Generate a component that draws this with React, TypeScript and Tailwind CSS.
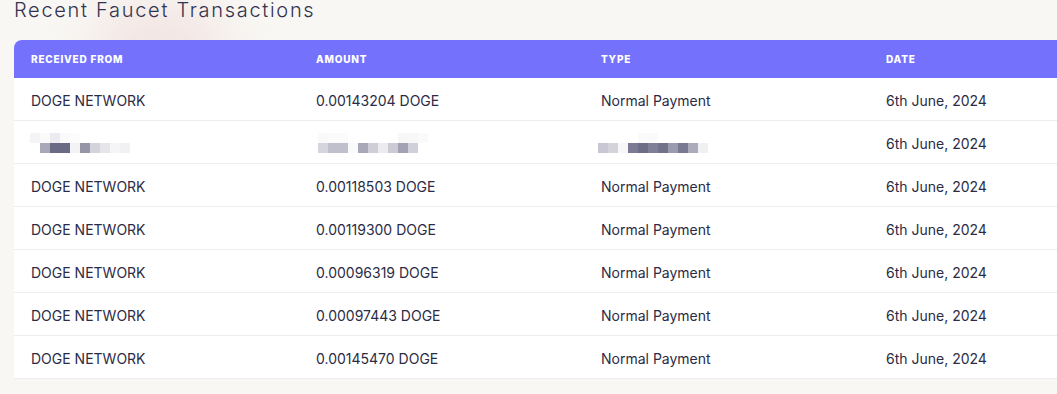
const rows = [
  { from: "DOGE NETWORK", amount: "0.00143204 DOGE", type: "Normal Payment", date: "6th June, 2024" },
  { hidden: true, date: "6th June, 2024" },
  { from: "DOGE NETWORK", amount: "0.00118503 DOGE", type: "Normal Payment", date: "6th June, 2024" },
  { from: "DOGE NETWORK", amount: "0.00119300 DOGE", type: "Normal Payment", date: "6th June, 2024" },
  { from: "DOGE NETWORK", amount: "0.00096319 DOGE", type: "Normal Payment", date: "6th June, 2024" },
  { from: "DOGE NETWORK", amount: "0.00097443 DOGE", type: "Normal Payment", date: "6th June, 2024" },
  { from: "DOGE NETWORK", amount: "0.00145470 DOGE", type: "Normal Payment", date: "6th June, 2024" },
];

// pixelated (censored) blocks, 10px each
const Pixels = ({ top, bottom }: { top: string[]; bottom: string[] }) => (
  <div className="flex flex-col">
    <div className="flex h-[10px]">
      {top.map((c, i) => (
        <div key={i} className="w-[10px] h-[10px]" style={{ background: c }} />
      ))}
    </div>
    <div className="flex h-[10px]">
      {bottom.map((c, i) => (
        <div key={i} className="w-[10px] h-[10px]" style={{ background: c }} />
      ))}
    </div>
  </div>
);

export default function App() {
  return (
    <div className="relative w-[1057px] h-[394px] overflow-hidden bg-[#f8f7f3] font-['Inter',sans-serif]">
      <div className="absolute left-[95px] top-[5px] w-[130px] h-[80px] rounded-full bg-[#f0dcdc] blur-[25px] opacity-70" />
      <div className="relative pl-[14px]">
        <h2 className="-mt-[4px] text-[20px] leading-[28px] font-light tracking-[1.7px] text-[#33334f]">
          Recent Faucet Transactions
        </h2>
        <div className="mt-[16px] w-[1140px] rounded-tl-[8px] overflow-hidden bg-white">
          <div className="grid grid-cols-4 h-[38px] items-center bg-[#7472fd] text-white text-[10px] font-extrabold tracking-[0.08em] uppercase">
            <div className="pl-[17px]">Received From</div>
            <div className="pl-[17px]">Amount</div>
            <div className="pl-[17px]">Type</div>
            <div className="pl-[17px]">Date</div>
          </div>
          {rows.map((r, i) => (
            <div
              key={i}
              className="grid grid-cols-4 h-[43px] pt-[3px] items-center border-b border-[#ededed] text-[14px] leading-[20px] text-[#2b2b45]"
            >
              {r.hidden ? (
                <>
                  <div className="pl-[16px] -mt-[2px]">
                    <Pixels
                      top={["#f4f4f6", "#fafafa", "#ececf0", "#fafafa", "#fcfcfc"]}
                      bottom={["#ffffff", "#a9a8b8", "#6b6a85", "#6b6a85", "#f3f3f5", "#9695a8", "#d4d3dc", "#e6e6ea", "#f5f5f7", "#f1f1f4"]}
                    />
                  </div>
                  <div className="pl-[19px] -mt-[2px]">
                    <Pixels
                      top={["#f9f9f9", "#fbfbfb", "#fbfbfb", "#ffffff", "#ffffff", "#ffffff", "#ffffff", "#ffffff", "#f7f7f7", "#f7f7f7", "#fafafa"]}
                      bottom={["#d6d5dd", "#c0bfcc", "#c0bfcc", "#fafafa", "#a9a8b8", "#cfced8", "#ececf0", "#cbcad5", "#a3a2b4", "#d1d0da"]}
                    />
                  </div>
                  <div className="pl-[14px] -mt-[2px]">
                    <Pixels
                      top={["#ffffff", "#ffffff", "#ffffff", "#ffffff", "#fafafa", "#fafafa"]}
                      bottom={["#c8c7d3", "#d4d3dc", "#f7f7f9", "#7c7b93", "#6e6d88", "#807f97", "#73728b", "#9b9aae", "#7a7992", "#acabbc", "#f0f0f3"]}
                    />
                  </div>
                </>
              ) : (
                <>
                  <div className="pl-[17px]">{r.from}</div>
                  <div className="pl-[17px]">{r.amount}</div>
                  <div className="pl-[17px]">{r.type}</div>
                </>
              )}
              <div className="pl-[17px]">{r.date}</div>
            </div>
          ))}
        </div>
      </div>
    </div>
  );
}
